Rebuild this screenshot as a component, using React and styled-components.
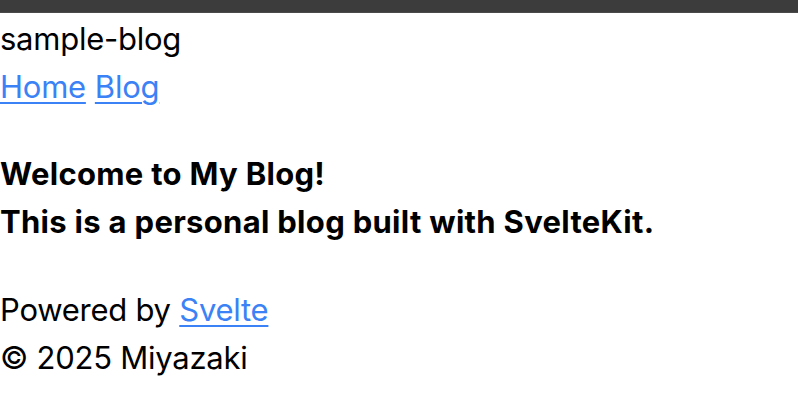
import React from "react";
import styled, { createGlobalStyle } from "styled-components";

const Global = createGlobalStyle`
  html, body { margin: 0; padding: 0; background: #ffffff; }
  body { font-family: Inter, "Noto Sans", sans-serif; color: #000; }
`;

const TopBar = styled.div`
  height: 12px;
  background: #3c3c3c;
  border-bottom: 1px solid #4a4a4a;
`;

const Page = styled.div`
  display: flex;
  flex-direction: column;
  font-size: 31px;
  line-height: 48px;
  letter-spacing: -0.25px;
  padding-top: 2px;
`;

const Header = styled.header`
  display: flex;
  flex-direction: column;
`;

const Nav = styled.nav`
  display: flex;
  gap: 9px;
`;

const Link = styled.a`
  color: #3b82f6;
  text-decoration: underline;
  text-underline-offset: 4px;
  text-decoration-thickness: 2px;
`;

const Main = styled.main`
  margin: 39px 0 40px;
  font-weight: 700;
  letter-spacing: 0.3px;
  display: flex;
  flex-direction: column;
`;

const Footer = styled.footer`
  display: flex;
  flex-direction: column;
`;

export default function App() {
  return (
    <>
      <Global />
      <TopBar />
      <Page>
        <Header>
          <div>sample-blog</div>
          <Nav>
            <Link href="#">Home</Link>
            <Link href="#">Blog</Link>
          </Nav>
        </Header>
        <Main>
          <div>Welcome to My Blog!</div>
          <div>This is a personal blog built with SvelteKit.</div>
        </Main>
        <Footer>
          <div>
            Powered by <Link href="#">Svelte</Link>
          </div>
          <div>© 2025 Miyazaki</div>
        </Footer>
      </Page>
    </>
  );
}
